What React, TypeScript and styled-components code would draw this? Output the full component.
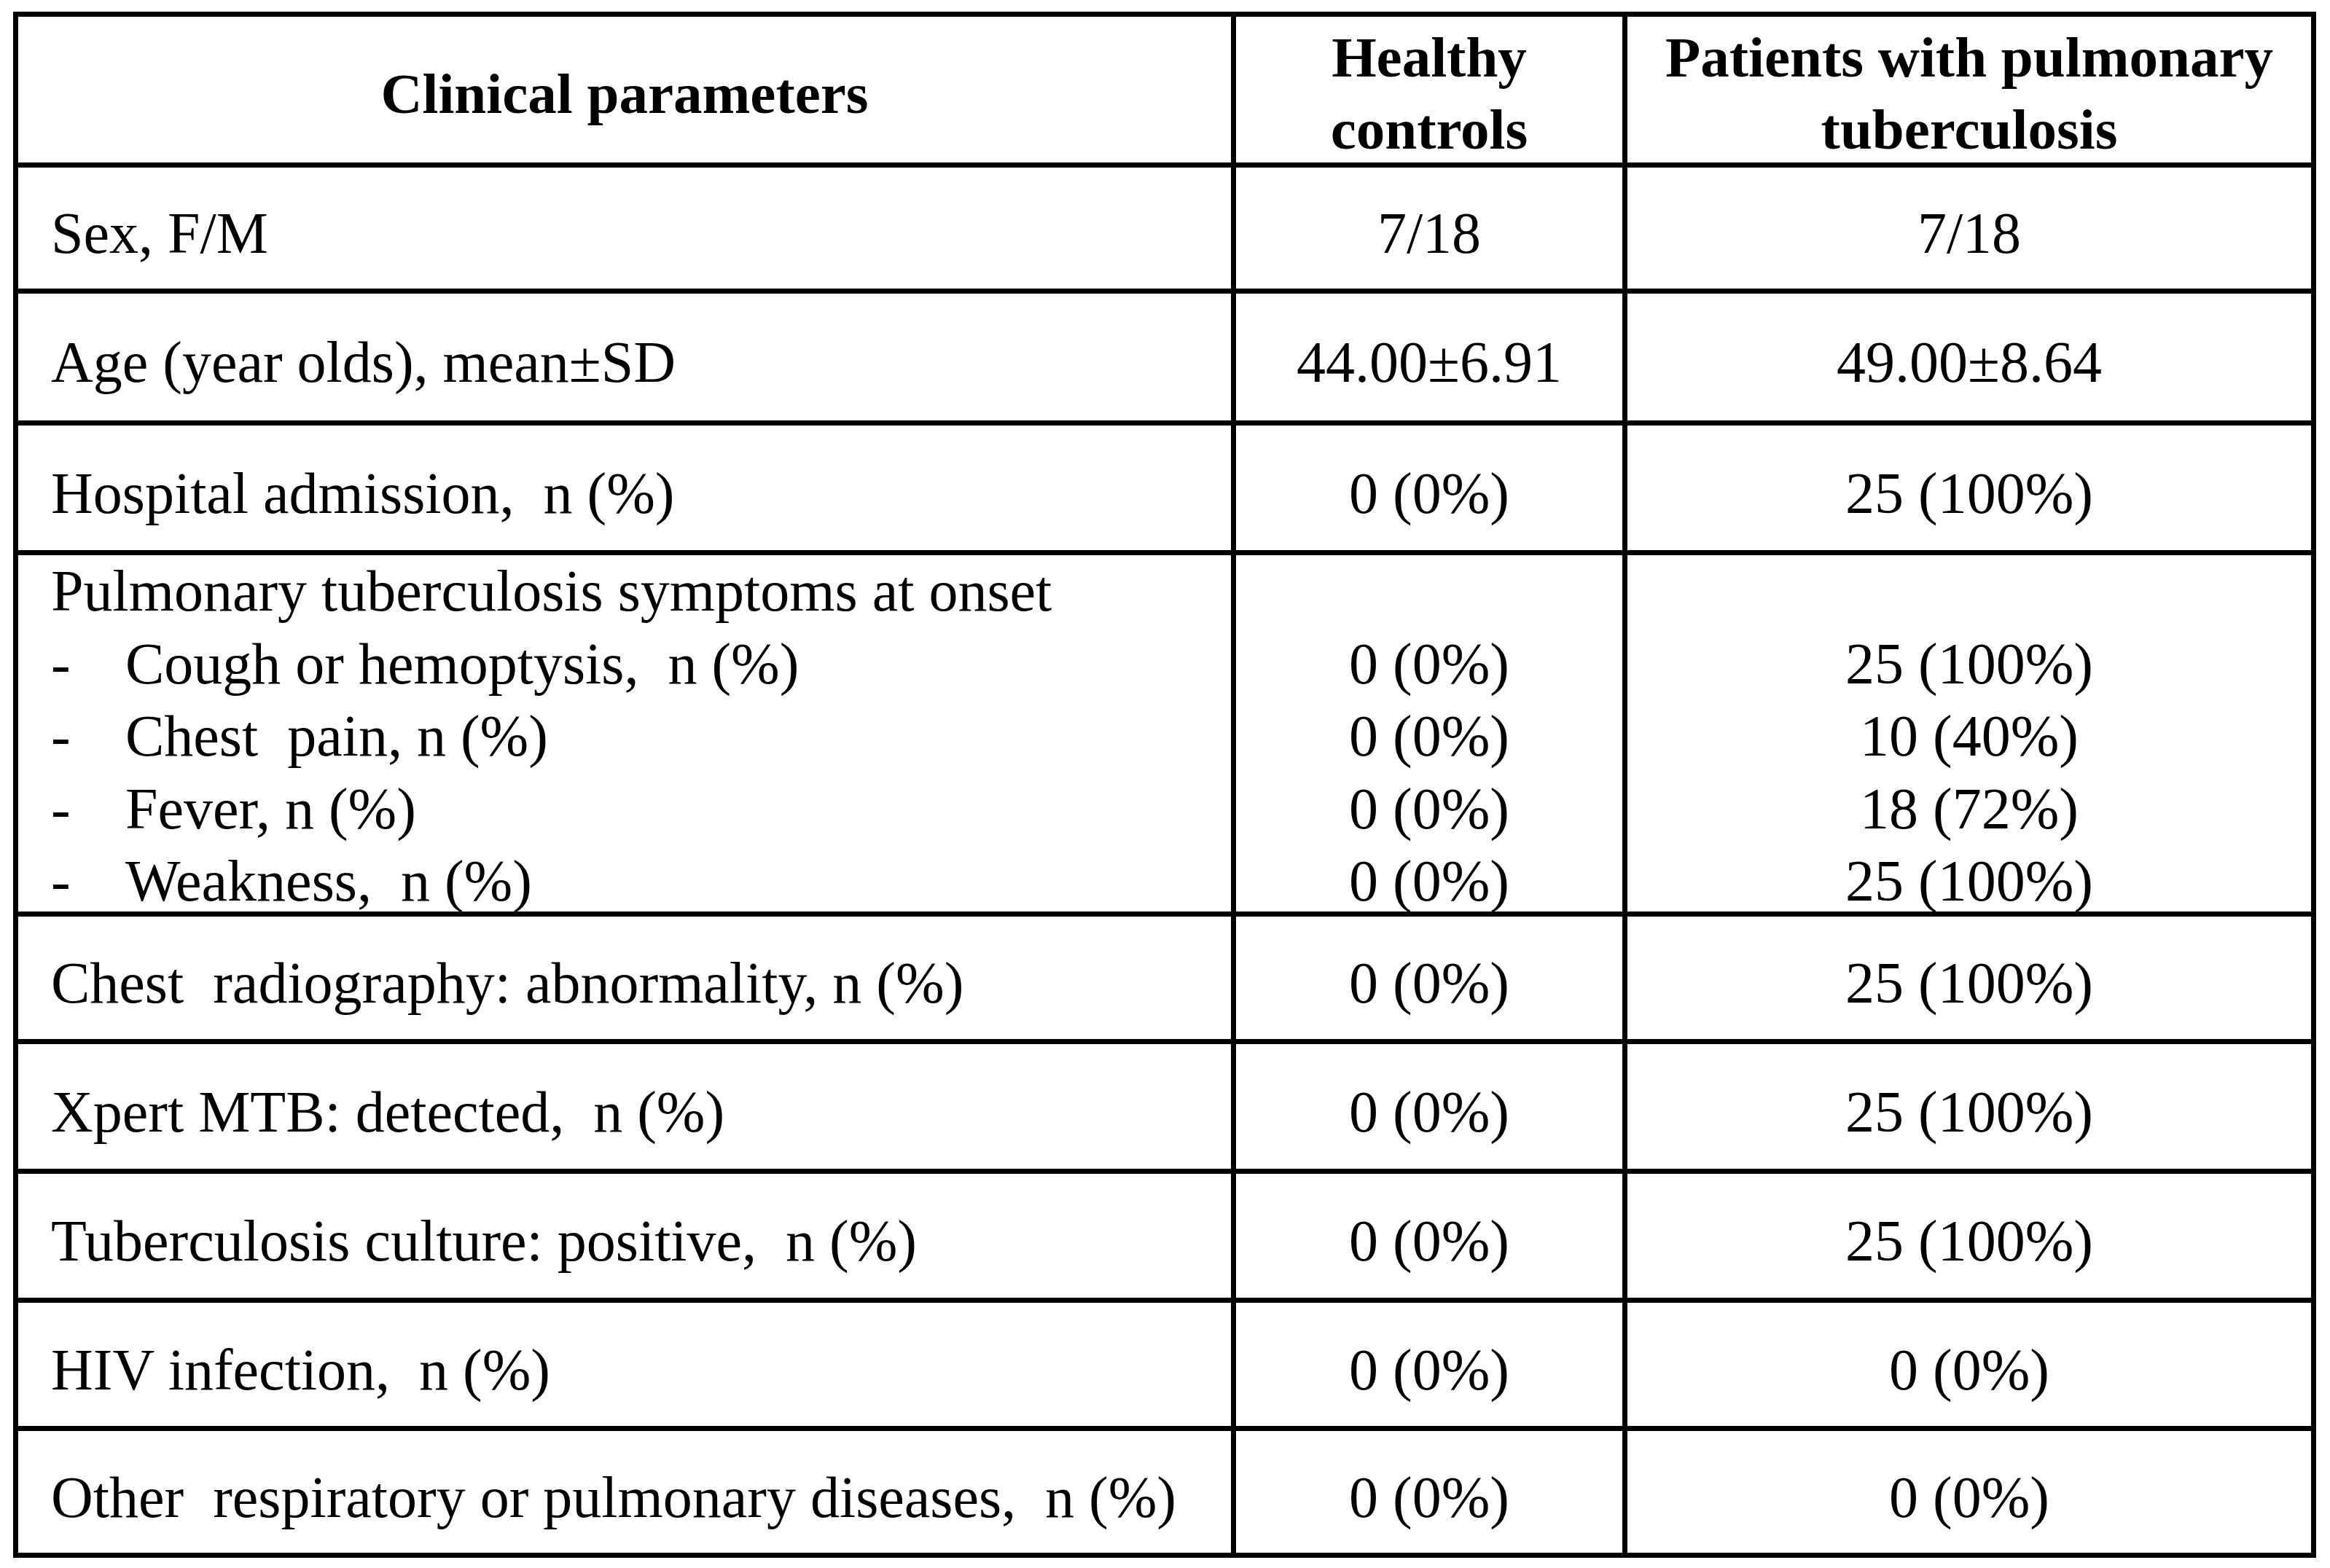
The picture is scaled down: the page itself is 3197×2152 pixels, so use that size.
import * as React from 'react';
import styled, { createGlobalStyle } from 'styled-components';

const GlobalStyle = createGlobalStyle`
  html, body {
    margin: 0;
    padding: 0;
    background: #fff;
  }

  body {
    font-family: "Liberation Serif", "Times New Roman", serif;
    color: #000;
  }
`;

interface SubItem {
  label: string;
  healthy: string;
  patients: string;
}

interface TableRow {
  label: string;
  healthy: string;
  patients: string;
  height: number;
  items?: SubItem[];
}

const HEADER_HEIGHT = 200;

const rows: TableRow[] = [
  { label: 'Sex, F/M', healthy: '7/18', patients: '7/18', height: 166 },
  { label: 'Age (year olds), mean±SD', healthy: '44.00±6.91', patients: '49.00±8.64', height: 174 },
  { label: 'Hospital admission,  n (%)', healthy: '0 (0%)', patients: '25 (100%)', height: 171 },
  {
    label: 'Pulmonary tuberculosis symptoms at onset',
    healthy: '',
    patients: '',
    height: 489,
    items: [
      { label: 'Cough or hemoptysis,  n (%)', healthy: '0 (0%)', patients: '25 (100%)' },
      { label: 'Chest  pain, n (%)', healthy: '0 (0%)', patients: '10 (40%)' },
      { label: 'Fever, n (%)', healthy: '0 (0%)', patients: '18 (72%)' },
      { label: 'Weakness,  n (%)', healthy: '0 (0%)', patients: '25 (100%)' },
    ],
  },
  { label: 'Chest  radiography: abnormality, n (%)', healthy: '0 (0%)', patients: '25 (100%)', height: 168 },
  { label: 'Xpert MTB: detected,  n (%)', healthy: '0 (0%)', patients: '25 (100%)', height: 171 },
  { label: 'Tuberculosis culture: positive,  n (%)', healthy: '0 (0%)', patients: '25 (100%)', height: 170 },
  { label: 'HIV infection,  n (%)', healthy: '0 (0%)', patients: '0 (0%)', height: 169 },
  { label: 'Other  respiratory or pulmonary diseases,  n (%)', healthy: '0 (0%)', patients: '0 (0%)', height: 167 },
];

const Page = styled.div`
  padding: 16px 0 0 18px;
`;

const Table = styled.div<{ $rows: string }>`
  display: grid;
  grid-template-columns: 1664px 530px 938px;
  grid-template-rows: ${p => p.$rows};
  gap: 7px;
  padding: 7px;
  width: max-content;
  background: #000;
`;

const HeadCell = styled.div`
  display: flex;
  align-items: center;
  justify-content: center;
  padding-top: 10px;
  box-sizing: border-box;
  background: #fff;
  font-size: 79px;
  font-weight: 700;
  line-height: 99px;
  text-align: center;
`;

const Cell = styled.div<{ $align: 'left' | 'center'; $top?: boolean }>`
  display: flex;
  flex-direction: column;
  justify-content: ${p => (p.$top ? 'flex-start' : 'center')};
  align-items: ${p => (p.$align === 'left' ? 'flex-start' : 'center')};
  padding-top: ${p => (p.$top ? '0' : '16px')};
  padding-left: ${p => (p.$align === 'left' ? '45px' : '0')};
  box-sizing: border-box;
  background: #fff;
  font-size: 80px;
  line-height: 99.5px;
  white-space: pre;
`;

const Line = styled.div`
  display: flex;
`;

const Bullet = styled.span`
  width: 102px;
  flex: none;
`;

export default function App(): JSX.Element {
  const template = [HEADER_HEIGHT, ...rows.map(r => r.height)].map(h => `${h}px`).join(' ');

  return (
    <Page>
      <GlobalStyle />
      <Table $rows={template}>
        <HeadCell>Clinical parameters</HeadCell>
        <HeadCell>Healthy<br />controls</HeadCell>
        <HeadCell>Patients with pulmonary<br />tuberculosis</HeadCell>

        {rows.map(row => {
          if (row.items) {
            return (
              <React.Fragment key={row.label}>
                <Cell $align="left" $top>
                  <Line>{row.label}</Line>
                  {row.items.map(item => (
                    <Line key={item.label}>
                      <Bullet>-</Bullet>
                      {item.label}
                    </Line>
                  ))}
                </Cell>
                <Cell $align="center" $top>
                  <Line>{'\u00a0'}</Line>
                  {row.items.map(item => <Line key={item.label}>{item.healthy}</Line>)}
                </Cell>
                <Cell $align="center" $top>
                  <Line>{'\u00a0'}</Line>
                  {row.items.map(item => <Line key={item.label}>{item.patients}</Line>)}
                </Cell>
              </React.Fragment>
            );
          }

          return (
            <React.Fragment key={row.label}>
              <Cell $align="left">{row.label}</Cell>
              <Cell $align="center">{row.healthy}</Cell>
              <Cell $align="center">{row.patients}</Cell>
            </React.Fragment>
          );
        })}
      </Table>
    </Page>
  );
}
